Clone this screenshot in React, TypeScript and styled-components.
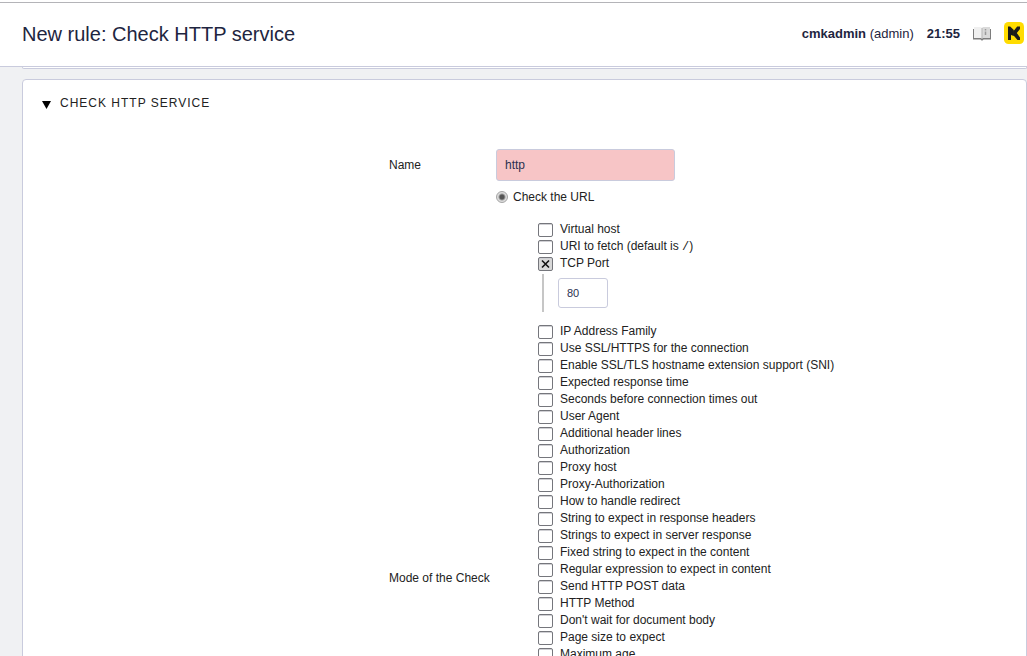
import React from "react";
import styled, { createGlobalStyle } from "styled-components";

const Global = createGlobalStyle`
  * { box-sizing: border-box; }
  body {
    margin: 0;
    background: #f0f1f3;
    color: #222;
    font-family: "Liberation Sans", Arial, sans-serif;
    font-size: 12px;
    line-height: 17px;
    overflow: hidden;
  }
`;

const Page = styled.div`
  display: flex;
  flex-direction: column;
  height: 100vh;
  overflow: hidden;
`;

const Header = styled.header`
  flex: none;
  display: flex;
  align-items: center;
  justify-content: space-between;
  height: 67px;
  padding: 0 3px 0 22px;
  background: #fff;
  border-bottom: 1px solid #c9cbdd;
  position: relative;
  color: #1e2540;

  &::before {
    content: "";
    position: absolute;
    inset: 2px 0 auto 0;
    border-top: 1px solid #b4b4b8;
  }
`;

const Title = styled.h1`
  margin: 0;
  padding-top: 2px;
  font-size: 20px;
  line-height: 24px;
  font-weight: 400;
`;

const UserBar = styled.div`
  display: flex;
  align-items: center;
  gap: 13px;
  font-size: 13px;
`;

const IconLink = styled.a`
  display: flex;
`;

const Content = styled.main`
  flex: 1;
  min-height: 0;
  overflow: hidden;
  padding-left: 22px;
`;

const PreviousPanel = styled.div`
  height: 2px;
  background: #fff;
  border: 1px solid #c9cbdd;
  border-top: 0;
  border-radius: 0 0 4px 4px;
`;

const Panel = styled.section`
  margin-top: 10px;
  padding: 15px 18px 20px;
  background: #fff;
  border: 1px solid #c9cbdd;
  border-radius: 4px;
`;

const PanelHeading = styled.h2`
  margin: 0;
  display: flex;
  align-items: center;
  gap: 9px;
  font-size: 12px;
  line-height: 17px;
  font-weight: 400;
  letter-spacing: 1px;
  text-transform: uppercase;
`;

const Form = styled.form`
  display: grid;
  grid-template-columns: 107px 1fr;
  row-gap: 8px;
  padding: 37px 0 0 348px;
`;

const NameLabel = styled.label`
  align-self: center;
`;

const ModeLabel = styled.div`
  padding-top: 381px;
`;

const TextInput = styled.input<{ $size: "wide" | "small"; $invalid?: boolean }>`
  display: block;
  width: ${(p) => (p.$size === "wide" ? "179px" : "50px")};
  height: ${(p) => (p.$size === "wide" ? "32px" : "30px")};
  padding: 0 8px;
  border: 1px solid #c9cbdd;
  border-radius: 3px;
  background: ${(p) => (p.$invalid ? "#f7c5c6" : "#fff")};
  color: #2b3150;
  font-family: inherit;
  font-size: ${(p) => (p.$size === "wide" ? "12px" : "11px")};
  outline: none;
`;

const Choice = styled.label`
  display: flex;
  width: max-content;
  height: 17px;
`;

const Radio = styled.input`
  appearance: none;
  width: 12px;
  height: 12px;
  margin: 2px 5px 0 0;
  border: 1px solid #a4a4a4;
  border-radius: 50%;
  background: radial-gradient(circle, #555 0 2px, #ddd 4px);
`;

const OptionList = styled.ul`
  list-style: none;
  margin: 15px 0 0 42px;
  padding: 0;
`;

const cross = `url("data:image/svg+xml,%3Csvg xmlns='http://www.w3.org/2000/svg' width='13' height='12'%3E%3Cpath d='M3 2.5l7 7M10 2.5l-7 7' stroke='%23111' stroke-width='1.6'/%3E%3C/svg%3E")`;

const Checkbox = styled.input`
  appearance: none;
  width: 15px;
  height: 14px;
  margin: 2px 7px 0 0;
  border: 1px solid #75767c;
  border-radius: 2px;
  background: #fff;
  box-shadow: inset 0 1px 0 #d0d0d4;

  &:checked {
    background: #d8d8d8 ${cross} center no-repeat;
  }
`;

const Nested = styled.div`
  margin: 2px 0 11px 4px;
  padding: 4px 0 4px 14px;
  border-left: 2px solid #c6c6c6;
`;

const Slash = styled.code`
  font-family: "Liberation Mono", monospace;
  font-size: 12px;
`;

const BookIcon = () => (
  <svg width="18" height="15" viewBox="0 0 18 15" aria-hidden="true">
    <path d="M0 3h1v9h16V3h1v10.500h-7.500l-1 1h-1l-1-1H0z" fill="#7d7d7d" />
    <path d="M1 1h7l1 1v10.500L8 12H1z" fill="#f0f0f0" />
    <path d="M17 1h-7L9 2v10.500l1-.500h7z" fill="#dadada" />
    <path d="M9 2v11" stroke="#b5b5b5" />
    <path d="M12.500 3v1.500M12.500 5.500V9" stroke="#9a9a9a" strokeWidth="1.500" />
  </svg>
);

const Logo = () => (
  <svg width="20" height="22" viewBox="0 0 20 22" aria-hidden="true">
    <rect width="20" height="22" rx="4.500" fill="#ffdc00" />
    <path d="M4 4.500h2.200L9.800 8v6L7 13v5H4z" fill="#1b1b1b" />
    <path d="M13.200 4.500H16V7l-3.200 4L16 15.500V18h-2.500L9.200 13V9.500z" fill="#1b1b1b" />
  </svg>
);

const options: { label: React.ReactNode; port?: string }[] = [
  { label: "Virtual host" },
  { label: <>URI to fetch (default is <Slash>/</Slash>)</> },
  { label: "TCP Port", port: "80" },
  { label: "IP Address Family" },
  { label: "Use SSL/HTTPS for the connection" },
  { label: "Enable SSL/TLS hostname extension support (SNI)" },
  { label: "Expected response time" },
  { label: "Seconds before connection times out" },
  { label: "User Agent" },
  { label: "Additional header lines" },
  { label: "Authorization" },
  { label: "Proxy host" },
  { label: "Proxy-Authorization" },
  { label: "How to handle redirect" },
  { label: "String to expect in response headers" },
  { label: "Strings to expect in server response" },
  { label: "Fixed string to expect in the content" },
  { label: "Regular expression to expect in content" },
  { label: "Send HTTP POST data" },
  { label: "HTTP Method" },
  { label: "Don't wait for document body" },
  { label: "Page size to expect" },
  { label: "Maximum age" },
];

export default function App() {
  return (
    <Page>
      <Global />
      <Header>
        <Title>New rule: Check HTTP service</Title>
        <UserBar>
          <span><b>cmkadmin</b> (admin)</span>
          <b>21:55</b>
          <IconLink href="#manual" aria-label="Manual"><BookIcon /></IconLink>
          <IconLink href="#home" aria-label="Home"><Logo /></IconLink>
        </UserBar>
      </Header>
      <Content>
        <PreviousPanel />
        <Panel>
          <PanelHeading>
            <svg width="10" height="10" viewBox="0 0 10 10" aria-hidden="true"><path d="M1 2h9L5.500 10z" fill="#000" /></svg>
            Check HTTP service
          </PanelHeading>
          <Form>
            <NameLabel htmlFor="name">Name</NameLabel>
            <TextInput id="name" $size="wide" $invalid defaultValue="http" />
            <ModeLabel id="mode">Mode of the Check</ModeLabel>
            <div role="radiogroup" aria-labelledby="mode">
              <Choice><Radio type="radio" name="mode" defaultChecked />Check the URL</Choice>
              <OptionList>
                {options.map((o, i) => (
                  <li key={i}>
                    <Choice><Checkbox type="checkbox" defaultChecked={!!o.port} /><span>{o.label}</span></Choice>
                    {o.port && <Nested><TextInput $size="small" aria-label="TCP Port" defaultValue={o.port} /></Nested>}
                  </li>
                ))}
              </OptionList>
            </div>
          </Form>
        </Panel>
      </Content>
    </Page>
  );
}
